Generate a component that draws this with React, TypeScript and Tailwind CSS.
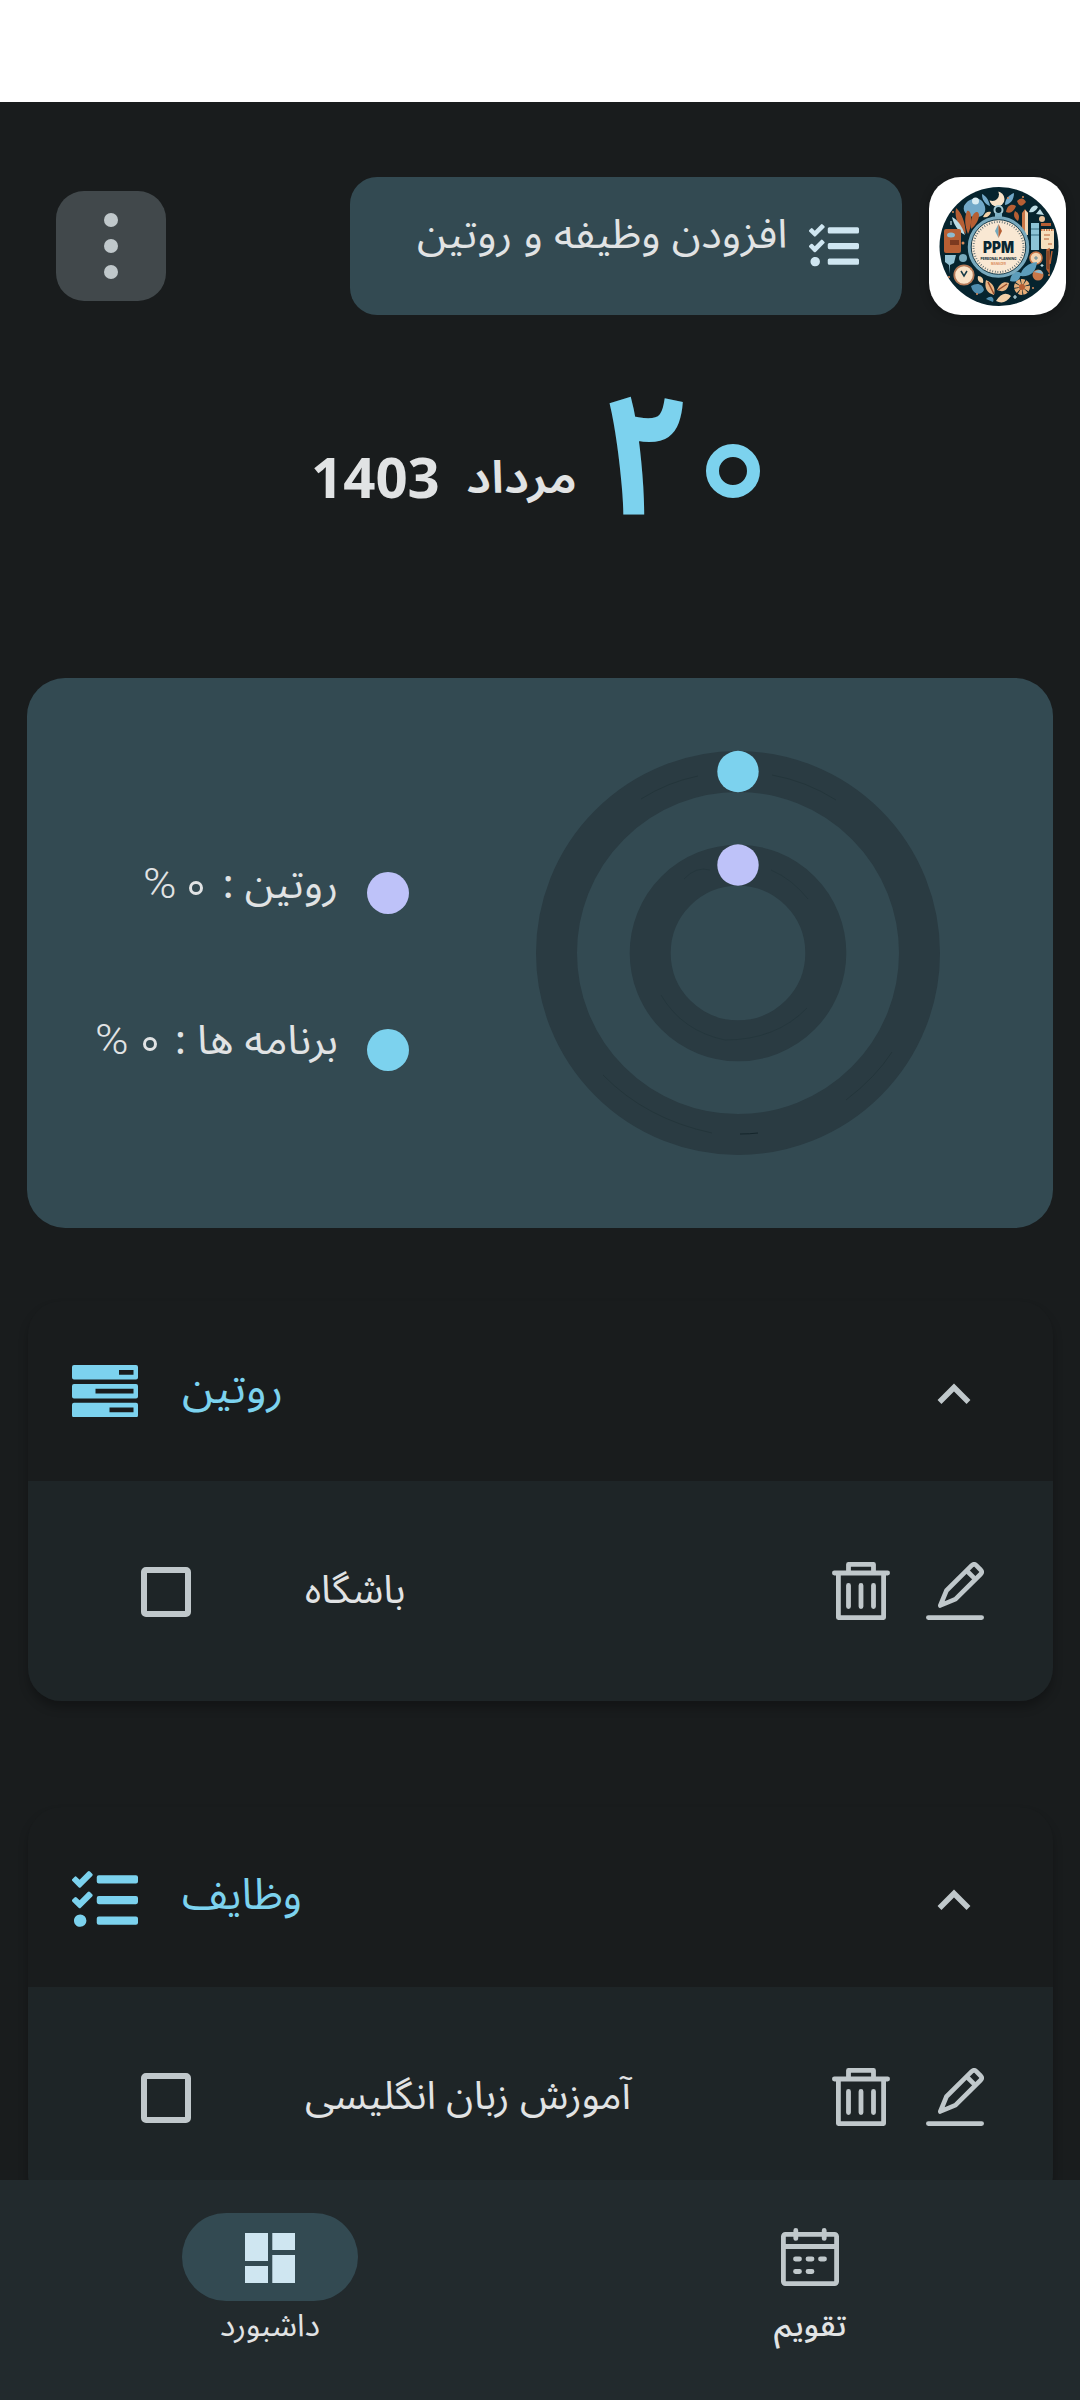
import { useLayoutEffect, useRef, useState } from "react";
import type { ReactNode } from "react";
import { FaTasks } from "react-icons/fa";

/** One line of text fitted to a set width; the box's bottom edge is the baseline. */
function Label({
  children,
  width,
  className,
  dir = "rtl",
}: {
  children: ReactNode;
  width: number;
  className: string;
  dir?: "rtl" | "ltr";
}) {
  const ref = useRef<HTMLSpanElement>(null);
  const [scale, setScale] = useState(1);
  useLayoutEffect(() => {
    if (ref.current) setScale(width / ref.current.offsetWidth);
  }, [width]);
  return (
    <div dir="ltr" className={`shrink-0 whitespace-nowrap text-left leading-[0] ${className}`} style={{ width }}>
      <span className="inline-block h-full w-0" />
      <span ref={ref} dir={dir} className="inline-block origin-left" style={{ transform: `scaleX(${scale})` }}>
        {children}
      </span>
    </div>
  );
}

function Logo() {
  return (
    <svg viewBox="0 0 137 138" className="h-[138px] w-[137px]">
      <circle cx="70" cy="69.500" r="59.500" fill="#06242e" />
      <path d="M61 17a7.500 7.500 0 1 0 12 9a8 8 0 0 1-8-12a8 8 0 0 0-4 3z" fill="#06242e" />
      <circle cx="68" cy="22" r="7.500" fill="#f8e3c8" />
      <circle cx="63.500" cy="17.500" r="6.500" fill="#06242e" />
      <path d="M35 29c4-8 16-11 20-2c4 8-2 14-8 13c-6 0-14-3-12-11z" fill="#72a9c9" />
      <circle cx="46.500" cy="24" r="3.500" fill="#d9ecf2" />
      <path d="M76 28c0-6 4-10 9-12c0 6-3 11-9 12zM53 17c4 2 7 6 8 12c-5-2-8-6-8-12z" fill="#72a9c9" />
      <path d="M27 31c6 5 9 14 10 26c-7-6-12-16-10-26zM38 34c5-3 6 14 1 23c-3-8-4-16-1-23zM47 35c5-1 4 10-5 17c0-8 0-14 5-17z" fill="#b65f34" />
      <path d="M23 40c6 3 10 9 13 18c-6-3-11-9-13-18z" fill="#bcdce4" />
      <path d="M54 40c2-5 5-6 8-5c-1 4-4 6-8 5z" fill="#f2d0a8" />
      <path d="M88 24c4-4 7-3 9 1c-4 5-7 5-9-1zM77 35c1-7 6-9 10-6c-2 5-5 8-10 6zM86 34c4 2 5 6 3 10c-4-3-5-6-3-10z" fill="#b65f34" />
      <path d="M100 35c2-6 6-8 9-5c-2 4-5 6-9 5zM107 37l8 1l-4-6z" fill="#bcdce4" />
      <circle cx="113" cy="42" r="3" fill="#e8c39d" />
      <path d="M93 36l3-4l3 4v22h-6z" fill="#c97748" />
      <path d="M96 33l3 3v22h-3z" fill="#f2d5b2" />
      <rect x="15" y="52" width="17" height="24" rx="2" fill="#b65f34" />
      <ellipse cx="22" cy="58" rx="4" ry="2.500" fill="#8dbbd0" />
      <path d="M21 63h9v5h-9z" fill="#7c3a20" />
      <rect x="102" y="46" width="8" height="27" fill="#8cc4d6" />
      <path d="M102 52h8M102 58h8" stroke="#356c80" />
      <rect x="112" y="52" width="13" height="20" rx="1" fill="#f6dfbd" />
      <path d="M112 53h13" stroke="#c97748" strokeWidth="2" strokeDasharray="1.500 1" />
      <path d="M115 58h6M115 62h5M119 67h4" stroke="#b65f34" />
      <path d="M112 46h10v3h-10z" fill="#b65f34" />
      <path d="M16 78h11l-2 8l-4 2v9l-1-9l-4-3z" fill="#95c4d6" />
      <circle cx="34" cy="81" r="4" fill="#78aabd" />
      <circle cx="35" cy="98" r="9.700" fill="#f8e3c8" stroke="#b57b59" strokeWidth="1.800" />
      <path d="M32 94l3 5l3-5" stroke="#173c48" strokeWidth="1.500" fill="none" />
      <circle cx="107" cy="81" r="6" fill="#f2d5b2" stroke="#c97748" strokeWidth="1.500" />
      <path d="M105 81h4M107 79v4" stroke="#5e8796" />
      <path d="M118 73v19l2 3V72zM123 74l-2 13" stroke="#b65f34" strokeWidth="1.500" />
      <path d="M91 99c2-8 8-13 17-14c-1 10-6 15-17 14zM81 104c1-8 6-11 11-8c-1 7-4 10-11 8z" fill="#5d9dbb" />
      <circle cx="109" cy="98" r="5.500" fill="#c97748" />
      <path d="M105 95c4-3 8-3 9 2z" fill="#8dbbd0" />
      <circle cx="93" cy="110" r="5" fill="none" stroke="#e5ad78" strokeWidth="6" strokeDasharray="3 .7" />
      <circle cx="93" cy="110" r="3" fill="#b65f34" />
      <path d="M57 103c7 3 10 8 8 15c-7-2-10-7-8-15zM68 113c3-7 7-9 12-7c-1 7-5 10-12 7z" fill="#e8b584" />
      <path d="M59 105l6 12M69 113l9-6" stroke="#9a4f2d" strokeWidth="1.500" />
      <path d="M67 124c5-8 10-9 15-5c-4 6-9 8-15 5zM49 99c4 0 6 3 5 7c-4 0-6-3-5-7z" fill="#f2d0a8" />
      <path d="M42 109c6-4 12-2 13 4c-3 6-11 5-13-4zM57 122c5-5 9-1 7 3z" fill="#4f8dae" />
      <path d="M86 118v4M84 120h4M113 87v3M111.500 88.500h3M22 44v4" stroke="#bcdce4" strokeWidth="1.200" />
      <g fill="#d98c5b">
        <circle cx="79" cy="21" r="1" /><circle cx="94" cy="20" r="1" /><circle cx="24" cy="35" r="1" />
        <circle cx="20" cy="100" r="1" /><circle cx="48" cy="117" r="1" /><circle cx="104" cy="111" r="1" />
        <circle cx="34" cy="66" r="1.500" /><circle cx="42" cy="92" r="1" /><circle cx="120" cy="98" r="1" />
      </g>
      <circle cx="69.500" cy="33" r="4" fill="none" stroke="#a7cbd5" strokeWidth="2" />
      <path d="M66 36h7v6h-7z" fill="#7eb1c4" />
      <circle cx="69.500" cy="70" r="29" fill="#f9e8d3" stroke="#78a9bd" strokeWidth="3.500" />
      <circle cx="69.500" cy="70" r="27.300" fill="none" stroke="#183b49" strokeWidth="1" />
      <circle cx="69.500" cy="70" r="25" fill="none" stroke="#53656b" strokeWidth="2" strokeDasharray=".8 1.820" />
      <path d="M69.500 47l-3.500 7l3.500 7z" fill="#73a9bd" />
      <path d="M69.500 47l3.500 7l-3.500 7z" fill="#b65f34" />
      <text x="69.500" y="76" textAnchor="middle" textLength="31" lengthAdjust="spacingAndGlyphs" fontFamily="Inter, sans-serif" fontWeight="900" fontSize="15.500" fill="#0a2632">PPM</text>
      <text x="69.500" y="82.500" textAnchor="middle" textLength="36" lengthAdjust="spacingAndGlyphs" fontFamily="Inter, sans-serif" fontWeight="700" fontSize="4" fill="#0a2632">PERSONAL PLANNING</text>
      <text x="69.500" y="88" textAnchor="middle" textLength="15" lengthAdjust="spacingAndGlyphs" fontFamily="Inter, sans-serif" fontWeight="700" fontSize="3" fill="#d98c5b">MANAGER</text>
    </svg>
  );
}

function RoutineIcon() {
  return (
    <svg viewBox="0 0 66 52" className="h-[52px] w-[66px]" fill="#7cd2ee" fillRule="evenodd">
      <path d="M2 0h62a2 2 0 0 1 2 2v10.500a2 2 0 0 1-2 2H2a2 2 0 0 1-2-2V2a2 2 0 0 1 2-2zM47 5v4.700h14.500V5z" />
      <path d="M2 19h62a2 2 0 0 1 2 2v10.500a2 2 0 0 1-2 2H2a2 2 0 0 1-2-2V21a2 2 0 0 1 2-2zM23.500 23.700v4.700h38v-4.700z" />
      <path d="M2 37.700h62a2 2 0 0 1 2 2v10.500a2 2 0 0 1-2 2H2a2 2 0 0 1-2-2V39.700a2 2 0 0 1 2-2zM37.500 42.600v4.700h24v-4.700z" />
    </svg>
  );
}

function TrashIcon() {
  return (
    <svg viewBox="0 0 58 58" className="h-[58px] w-[58px]" fill="none" stroke="#c0c8cb" strokeWidth="4.800" strokeLinecap="round" strokeLinejoin="round">
      <path d="M2.400 11h53.200M16.500 10V2.400h25V10M6.400 12v43.600h45.200V12M16.500 23.500v21M29 23.500v21M41.500 23.500v21" />
    </svg>
  );
}

function EditIcon() {
  return (
    <svg viewBox="0 0 58 58" className="h-[58px] w-[58px]" fill="none" stroke="#c0c8cb" strokeWidth="4.600" strokeLinecap="round" strokeLinejoin="round">
      <path d="M2.400 55.600h53.200" strokeWidth="4.800" />
      <path d="M14.300 43.500L20.500 28.500L46 3.200Q48.200 1.400 50 3.200L54.800 8Q56.600 10 54.800 12L29.500 37.200z" />
      <path d="M41.500 9.500l7.200 7.200" />
    </svg>
  );
}

function CalendarIcon() {
  return (
    <svg viewBox="0 0 58 58" className="h-[58px] w-[58px]" fill="none" stroke="#c0c8cb" strokeWidth="4.800" strokeLinecap="round" strokeLinejoin="round">
      <rect x="2.400" y="6.400" width="53.200" height="49.200" rx="2" />
      <path d="M2.400 18.500h53.200M14.800 2.400v8M43.200 2.400v8M14.500 31h4M27 31h4M39.500 31h4M14.500 43.500h4M27 43.500h4" />
    </svg>
  );
}

function Section({
  icon,
  title,
  titleWidth,
  item,
  itemWidth,
}: {
  icon: ReactNode;
  title: string;
  titleWidth: number;
  item: string;
  itemWidth: number;
}) {
  return (
    <section className="ml-7 mr-[27px] overflow-hidden rounded-[33px] shadow-[0_7px_10px_0px_rgba(0,0,0,0.26)]">
      <header className="flex h-[180px] bg-[#191c1d] pl-11">
        <div className="flex h-[180px] w-[66px] items-center">{icon}</div>
        <div className="ml-[44px]">
          <Label width={titleWidth} className="h-[102px] text-[43px] text-[#7cd2ee]">{title}</Label>
        </div>
        <svg viewBox="0 0 34 22" className="ml-auto mr-[82px] mt-[82px] h-[22px] w-[34px]" fill="none" stroke="#c0c8cb" strokeWidth="5.500">
          <path d="M2.500 19L17 4.500L31.500 19" />
        </svg>
      </header>
      <div className="flex h-[220px] bg-[#1e2527] pl-[113px] pr-[69px]">
        <span className="mt-[86px] h-[50px] w-[50px] rounded-[5px] border-[6px] border-[#c0c8cb]" />
        <div className="ml-[114px]">
          <Label width={itemWidth} className="h-[122px] text-[39px] text-[#e1e3e4]">{item}</Label>
        </div>
        <div className="ml-auto mt-[81px] flex h-[58px] gap-9">
          <TrashIcon />
          <EditIcon />
        </div>
      </div>
    </section>
  );
}

export default function App() {
  return (
    <div className="flex h-[2400px] w-[1080px] flex-col overflow-hidden bg-[#191c1d] font-['Noto_Sans_Arabic','DejaVu_Sans',sans-serif]">
      <div className="h-[102px] shrink-0 bg-white" />
      <div className="flex h-[2078px] shrink-0 flex-col overflow-hidden">
        <header className="mt-[75px] flex h-[138px] shrink-0 items-center pl-14 pr-[14px]">
          <button className="flex h-[110px] w-[110px] flex-col items-center justify-center gap-[12px] rounded-[28px] bg-[#41484b]">
            <i className="h-[14px] w-[14px] rounded-full bg-[#c0c8cb]" />
            <i className="h-[14px] w-[14px] rounded-full bg-[#c0c8cb]" />
            <i className="h-[14px] w-[14px] rounded-full bg-[#c0c8cb]" />
          </button>
          <button className="ml-auto flex h-[138px] w-[552px] justify-end rounded-[27px] bg-[#334a52] pr-[43px]">
            <Label width={370} className="h-[71px] text-[40px] text-[#e1e3e4]">افزودن وظیفه و روتین</Label>
            <FaTasks className="ml-[22px] mt-[44px] h-[50px] w-[50px] text-[#cfe6f1]" />
          </button>
          <div className="ml-[27px] h-[138px] w-[137px] overflow-hidden rounded-[32px] bg-white shadow-[0_2px_10px_rgba(0,0,0,0.3)]">
            <Logo />
          </div>
        </header>

        <div className="flex h-[363px] shrink-0 pl-[311px]">
          <Label dir="ltr" width={129} className="h-[183px] font-['Open_Sans',sans-serif] text-[55px] font-bold text-[#e1e3e4]">1403</Label>
          <div className="ml-[26px]">
            <Label width={111} className="h-[178px] text-[45px] font-semibold text-[#e1e3e4]">مرداد</Label>
          </div>
          <div className="relative ml-[25px]">
            <Label width={177} className="h-[199px] text-[172px] font-bold text-[#7cd2ee]">
              ۲<span className="text-transparent">۰</span>
            </Label>
            <i className="absolute bottom-[180px] left-[104px] h-[54px] w-[54px] rounded-full border-[13px] border-[#7cd2ee]" />
          </div>
        </div>

        <section className="mx-[27px] flex h-[550px] shrink-0 rounded-[38px] bg-[#334a52]">
          <div className="flex w-[382px] flex-col">
            <div className="flex h-[215px] justify-end">
              <div className="relative mr-[29px] h-[220px]">
                <Label width={195} className="h-[220px] text-[40px] text-[#e1e3e4]">
                  روتین : <span className="text-transparent">۰</span> <span className="font-['Roboto',sans-serif] text-[43px] font-light">%</span>
                </Label>
                <i className="absolute bottom-[3px] left-[46px] h-[14px] w-[14px] rounded-full border-[3.5px] border-[#e1e3e4]" />
              </div>
              <span className="mt-[194px] h-[42px] w-[42px] shrink-0 rounded-full bg-[#bec2f9]" />
            </div>
            <div className="flex justify-end">
              <div className="relative mr-[29px] h-[161px]">
                <Label width={243} className="h-[161px] text-[40px] text-[#e1e3e4]">
                  برنامه ها : <span className="text-transparent">۰</span> <span className="font-['Roboto',sans-serif] text-[43px] font-light">%</span>
                </Label>
                <i className="absolute bottom-[3px] left-[48px] h-[14px] w-[14px] rounded-full border-[3.5px] border-[#e1e3e4]" />
              </div>
              <span className="mt-[136px] h-[42px] w-[42px] shrink-0 rounded-full bg-[#7cd2ee]" />
            </div>
          </div>
          <svg viewBox="0 0 404 406" className="ml-[127px] mt-[72px] h-[406px] w-[404px]" fill="none">
            <circle cx="202" cy="203" r="181.500" stroke="#2a3b42" strokeWidth="41" />
            <circle cx="202" cy="203" r="87.800" stroke="#2a3b42" strokeWidth="41" />
            <path d="M67 325Q110 369 176 383M310 350Q340 327 356 302M105 49Q132 32 162 26M236 25Q270 31 300 50" stroke="#223339" strokeWidth=".8" />
            <path d="M204 384Q214 384 222 383" stroke="#14252b" />
            <path d="M125 245Q146 281 189 290Q240 290 271 258M148 129Q160 116 174 120M235 120Q256 129 272 149" stroke="#1d2f36" strokeWidth=".7" opacity=".6" />
            <circle cx="202" cy="21.500" r="20.700" fill="#7cd2ee" />
            <circle cx="202" cy="115" r="20.700" fill="#bec2f9" />
          </svg>
        </section>

        <div className="mt-[73px] flex shrink-0 flex-col gap-[106px]">
          <Section icon={<RoutineIcon />} title="روتین" titleWidth={101} item="باشگاه" itemWidth={100} />
          <Section icon={<FaTasks className="mt-[6px] h-[66px] w-[66px] text-[#7cd2ee]" />} title="وظایف" titleWidth={120} item="آموزش زبان انگلیسی" itemWidth={326} />
        </div>
      </div>

      <nav className="flex h-[220px] shrink-0 bg-[#222a2d]">
        <div className="flex w-1/2 flex-col items-center">
          <div className="mt-[33px] flex h-[88px] w-[176px] items-center justify-center rounded-full bg-[#334a52]">
            <svg viewBox="0 0 50 50" className="h-[50px] w-[50px] translate-y-px" fill="#cfe6f1">
              <path d="M0 0h23v28H0zM27.300 0H50v17H27.300zM27.300 22H50v28H27.300zM0 33h23v17H0z" />
            </svg>
          </div>
          <Label width={100} className="h-[35px] text-[31px] text-[#e1e3e4]">داشبورد</Label>
        </div>
        <div className="flex w-1/2 flex-col items-center">
          <div className="mt-[48px] h-[58px]"><CalendarIcon /></div>
          <Label width={73} className="h-[50px] text-[31px] font-medium text-[#e1e3e4]">تقویم</Label>
        </div>
      </nav>
    </div>
  );
}
